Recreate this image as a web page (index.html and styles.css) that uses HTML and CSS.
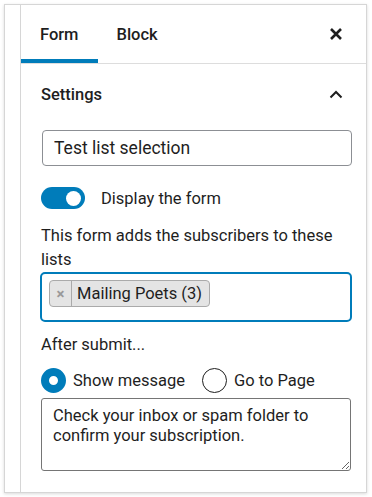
FILE: index.html
```html
<!DOCTYPE html>
<html lang="en">
<head>
    <meta charset="UTF-8">
    <meta name="viewport" content="width=device-width, initial-scale=1.0">
    <title>Form Settings</title>
    <link rel="stylesheet" href="styles.css">
</head>
<body>

    <div class="frame">
        <div class="gutter"></div>

        <!-- Sidebar panel -->
        <div class="panel">
            <div class="tabs">
                <button class="tab active">Form</button>
                <button class="tab">Block</button>
                <button class="close-btn" aria-label="Close">
                    <svg width="14" height="14" viewBox="0 0 14 14">
                        <path d="M2 2 L12 12 M12 2 L2 12" stroke="#1e1e1e" stroke-width="2.6" fill="none"/>
                    </svg>
                </button>
            </div>

            <div class="panel-body">
                <div class="section-header">
                    <span>Settings</span>
                    <svg width="14" height="9" viewBox="0 0 14 9">
                        <path d="M1.5 7.5 L7 2 L12.5 7.5" stroke="#1e1e1e" stroke-width="2" fill="none"/>
                    </svg>
                </div>

                <input class="text-input" type="text" value="Test list selection">

                <!-- Toggle -->
                <label class="toggle-row">
                    <span class="toggle"><span class="knob"></span></span>
                    Display the form
                </label>

                <p class="help">This form adds the subscribers to these lists</p>

                <div class="token-field">
                    <span class="token">
                        <span class="token-remove">&times;</span>
                        <span class="token-label">Mailing Poets (3)</span>
                    </span>
                </div>

                <p class="after-label">After submit...</p>

                <div class="radios">
                    <label class="radio-row"><span class="radio checked"></span>Show message</label>
                    <label class="radio-row"><span class="radio"></span>Go to Page</label>
                </div>

                <textarea class="message">Check your inbox or spam folder to confirm your subscription.</textarea>
            </div>
        </div>
    </div>

</body>
</html>
```

FILE: styles.css
```css
body {
    margin: 0;
    padding: 4px;
    background-color: #fff;
    font-family: Roboto, "Liberation Sans", sans-serif;
    font-size: 16.5px;
    color: #1e1e1e;
}

/* Outer frame */
.frame {
    display: flex;
    width: 363px;
    height: 489px;
    box-sizing: border-box;
    border: 1px solid #d6d6d6;
    box-shadow: 0 1px 3px rgba(0, 0, 0, 0.15);
}

.gutter {
    width: 15px;
    border-right: 1px solid #d6d6d6;
}

.panel {
    flex: 1;
}

/* Tabs */
.tabs {
    display: flex;
    align-items: stretch;
    height: 58px;
    border-bottom: 1px solid #dddddd;
}

.tab {
    background: none;
    border: none;
    padding: 0 19px;
    font-family: inherit;
    font-size: 16.5px;
    font-weight: 500;
    color: #1e1e1e;
    cursor: pointer;
}

.tab.active {
    box-shadow: inset 0 -4px 0 #007cba;
}

.close-btn {
    margin-left: auto;
    margin-right: 23px;
    background: none;
    border: none;
    padding: 0;
    display: flex;
    align-items: center;
}

/* Body */
.panel-body {
    padding: 0 14px 0 20px;
}

.section-header {
    height: 60px;
    display: flex;
    align-items: center;
    justify-content: space-between;
    padding-right: 9px;
    font-weight: 500;
}

.text-input {
    display: block;
    height: 36px;
    box-sizing: border-box;
    margin: 6px 0 0 1px;
    width: 310px;
    padding: 0 11px;
    border: 1px solid #8c8f94;
    border-radius: 4px;
    font-family: inherit;
    font-size: 17.5px;
    color: #1e1e1e;
}

/* Toggle */
.toggle-row {
    display: flex;
    align-items: center;
    gap: 16px;
    margin-top: 21px;
}

.toggle {
    width: 44px;
    height: 22px;
    border-radius: 11px;
    background-color: #007cba;
    display: flex;
    align-items: center;
    justify-content: flex-end;
    padding-right: 4px;
    box-sizing: border-box;
}

.knob {
    width: 15px;
    height: 15px;
    border-radius: 50%;
    background-color: #fff;
}

.help {
    margin: 15px 0 0;
    line-height: 24px;
    padding-right: 6px;
}

/* Token field */
.token-field {
    margin: 0 0 0 -1px;
    height: 50px;
    box-sizing: border-box;
    border: 2px solid #007cba;
    border-radius: 5px;
    padding: 6px 7px;
}

.token {
    display: inline-flex;
    align-items: stretch;
    height: 27px;
    box-sizing: border-box;
    background-color: #e4e4e4;
    border: 1px solid #aaaaaa;
    border-radius: 4px;
}

.token-remove {
    width: 21px;
    display: flex;
    align-items: center;
    justify-content: center;
    border-right: 1px solid #aaaaaa;
    color: #999;
    font-weight: bold;
    font-size: 15px;
}

.token-label {
    display: flex;
    align-items: center;
    padding: 0 7px 0 5px;
}

.after-label {
    margin: 11px 0 0;
    line-height: 24px;
}

/* Radios */
.radios {
    display: flex;
    gap: 17px;
    margin-top: 11px;
}

.radio-row {
    display: flex;
    align-items: center;
    gap: 7px;
}

.radio {
    width: 25px;
    height: 25px;
    box-sizing: border-box;
    border-radius: 50%;
    border: 1px solid #1e1e1e;
    background-color: #fff;
}

.radio.checked {
    border: 8px solid #007cba;
}

.message {
    display: block;
    margin-top: 5px;
    width: 310px;
    height: 73px;
    box-sizing: border-box;
    padding: 7px 11px;
    border: 1px solid #757575;
    border-radius: 3px;
    font-family: inherit;
    font-size: 16.5px;
    line-height: 20px;
    color: #1e1e1e;
    resize: vertical;
}
```
